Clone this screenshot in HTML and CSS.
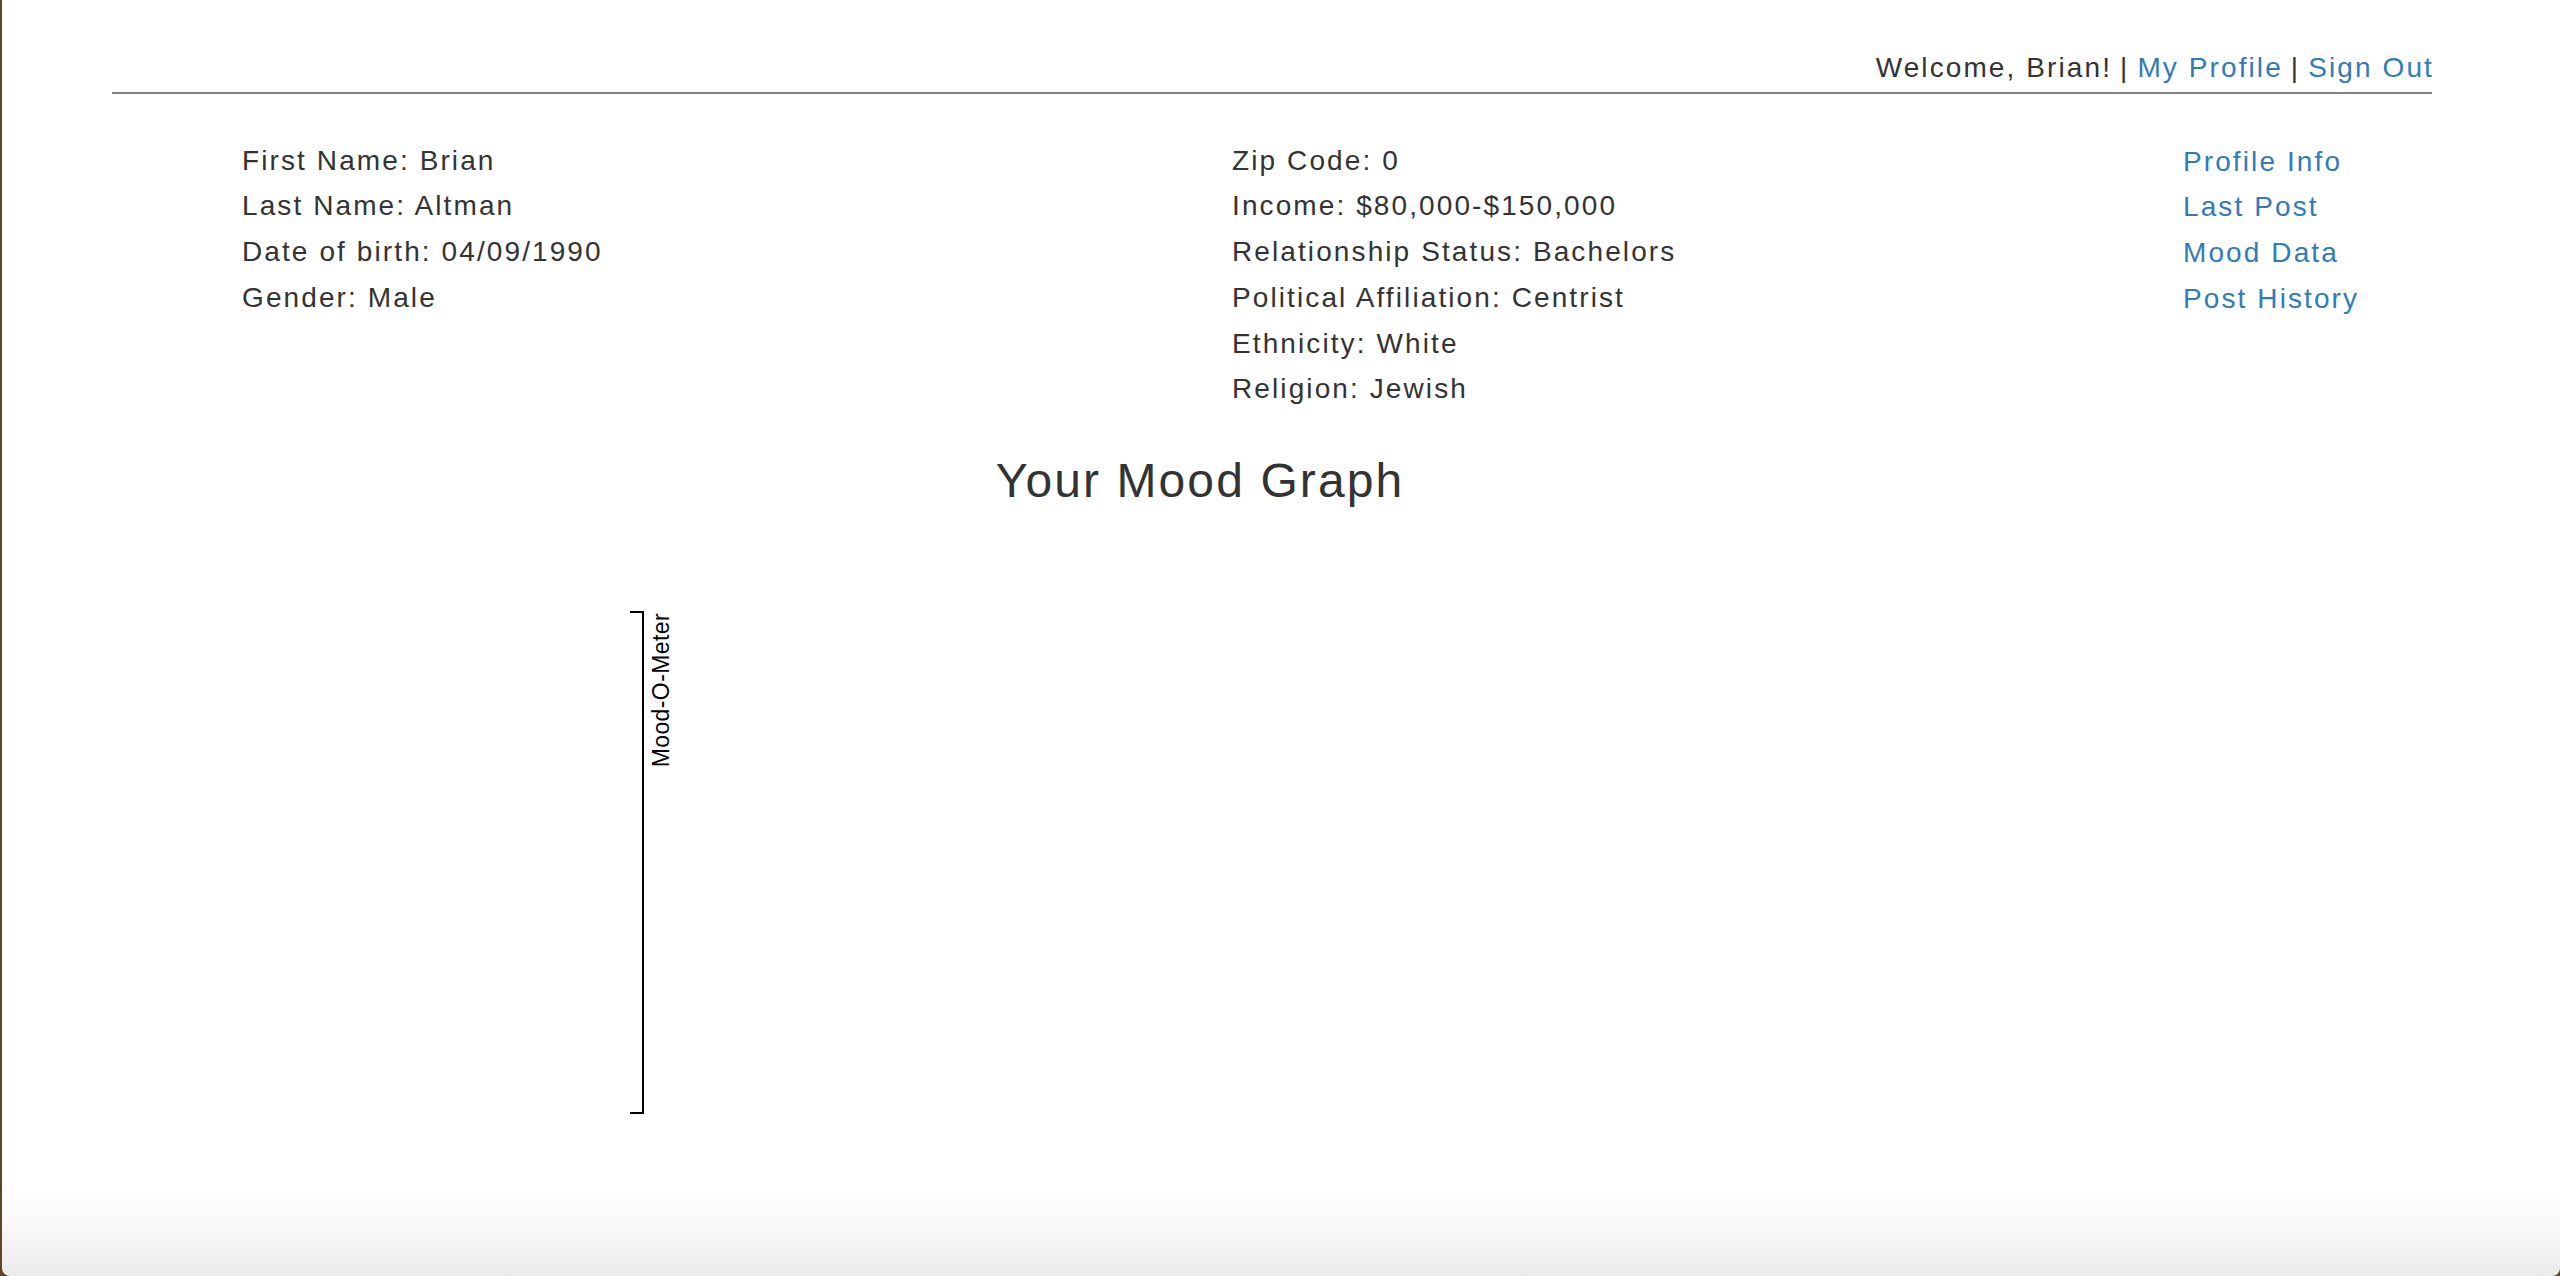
FILE: index.html
```html
<!DOCTYPE html>
<html lang="en">
<head>
<meta charset="utf-8">
<title>Your Mood Graph</title>
<link rel="stylesheet" href="styles.css">
</head>
<body>
<div class="window">
  <div class="container">
    <header class="topbar">
      <span class="welcome">Welcome, Brian!</span>
      <span class="sep">|</span>
      <a href="#" class="link">My Profile</a>
      <span class="sep">|</span>
      <a href="#" class="link last">Sign Out</a>
    </header>

    <section class="info">
      <div class="col col-personal">
        <div class="row">First Name: Brian</div>
        <div class="row">Last Name: Altman</div>
        <div class="row">Date of birth: 04/09/1990</div>
        <div class="row">Gender: Male</div>
      </div>
      <div class="col col-demo">
        <div class="row">Zip Code: 0</div>
        <div class="row">Income: $80,000-$150,000</div>
        <div class="row">Relationship Status: Bachelors</div>
        <div class="row">Political Affiliation: Centrist</div>
        <div class="row">Ethnicity: White</div>
        <div class="row">Religion: Jewish</div>
      </div>
      <nav class="col col-nav">
        <a href="#" class="link row">Profile Info</a>
        <a href="#" class="link row">Last Post</a>
        <a href="#" class="link row">Mood Data</a>
        <a href="#" class="link row">Post History</a>
      </nav>
    </section>

    <h2 class="graph-title">Your Mood Graph</h2>

    <svg class="graph" width="2320" height="560" viewBox="0 0 2320 560">
      <g class="y-axis">
        <path d="M518,24H531V525H518" fill="none" stroke="#000" stroke-width="2" shape-rendering="crispEdges"/>
        <text transform="translate(557,25) rotate(-90)" text-anchor="end" class="axis-label">Mood-O-Meter</text>
      </g>
    </svg>
  </div>
</div>
</body>
</html>
```

FILE: styles.css
```css
html {
  background: #5f4629;
  margin: 0;
  padding: 0;
}

body {
  margin: 0;
  padding: 0;
  font-family: "Liberation Sans", Arial, Helvetica, sans-serif;
  color: #333333;
}

.window {
  margin-left: 2px;
  height: 1276px;
  background: linear-gradient(to bottom, #ffffff 0, #ffffff 1188px, #fbfbfb 1215px, #ebebeb 1276px);
  border-bottom-left-radius: 8px;
  border-bottom-right-radius: 8px;
  overflow: hidden;
}

.container {
  width: 2320px;
  margin-left: 110px;
  font-size: 28px;
  line-height: 45.7px;
  letter-spacing: 2.1px;
}

.link {
  color: #337ab7;
  text-decoration: none;
}

.topbar {
  display: flex;
  justify-content: flex-end;
  gap: 8px;
  padding-top: 45px;
  padding-bottom: 1px;
  border-bottom: 2px solid #808080;
}

.topbar .last {
  margin-right: -2px;
}

.topbar .sep {
  color: #333333;
}

.info {
  display: flex;
  margin-top: 44px;
  padding-left: 130px;
}

.col {
  display: flex;
  flex-direction: column;
}

.col-personal {
  width: 990px;
}

.col-demo {
  width: 951px;
}

.col-nav .row {
  display: block;
  padding-top: 1px;
  margin-bottom: -1px;
}

.graph-title {
  width: 2176px;
  margin: 43px 0 0 0;
  text-align: center;
  font-size: 48px;
  font-weight: normal;
  line-height: 52.8px;
  letter-spacing: 2.1px;
  color: #333333;
}

.graph {
  display: block;
  margin-top: 80px;
}

.axis-label {
  font-family: "Liberation Sans", Arial, Helvetica, sans-serif;
  font-size: 23px;
  letter-spacing: 0.4px;
  fill: #000000;
}
```
